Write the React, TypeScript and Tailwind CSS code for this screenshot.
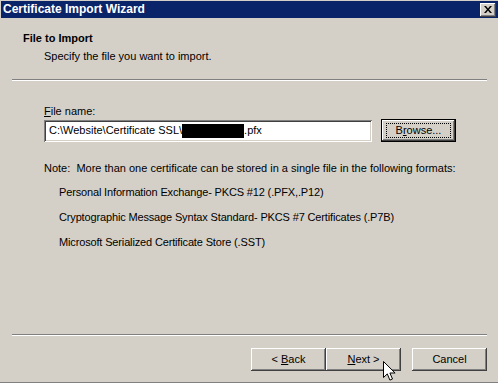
import React from "react";

const raised =
  "shadow-[inset_-1px_-1px_0_#404040,inset_1px_1px_0_#ffffff,inset_-2px_-2px_0_#808080,inset_2px_2px_0_#d4d0c8]";

function WinButton({ children, className = "" }: { children: React.ReactNode; className?: string }) {
  return (
    <div className={`w-[75px] h-[23px] bg-[#d4d0c8] flex items-center justify-center ${raised} ${className}`}>
      {children}
    </div>
  );
}

function Separator() {
  return (
    <div className="mx-[12px] w-[475px]">
      <div className="h-px bg-[#808080]" />
      <div className="h-px bg-white" />
    </div>
  );
}

export default function App() {
  return (
    <div className="relative w-[498px] h-[383px] overflow-hidden bg-[#d4d0c8] text-black text-[11px] leading-[13px] font-['Liberation_Sans',Arial,sans-serif] border-b border-[#808080]">
      {/* title bar */}
      <div className="mt-px ml-px h-[17px] bg-[#0a246a] flex items-center justify-between pl-[2px] pr-[2px]">
        <span className="text-white font-bold text-[12px]">Certificate Import Wizard</span>
        <div className={`w-[16px] h-[14px] bg-[#d4d0c8] flex items-center justify-center ${raised}`}>
          <svg width="8" height="7" viewBox="0 0 8 7">
            <path d="M0 0h2l2 2.5L6 0h2L5 3.5 8 7H6L4 4.5 2 7H0l3-3.5z" fill="#000" />
          </svg>
        </div>
      </div>

      {/* header */}
      <div className="pt-[14px] pl-[23px] font-bold">File to Import</div>
      <div className="pt-[5px] pl-[44px]">Specify the file you want to import.</div>
      <div className="mt-[16px]">
        <Separator />
      </div>

      {/* body */}
      <div className="pl-[44px] pt-[24px]">
        <div>
          <span className="underline">F</span>ile name:
        </div>
        <div className="mt-[1px] flex items-center gap-[9px]">
          <div className="w-[328px] h-[22px] bg-white flex items-center pl-[5px] shadow-[inset_1px_1px_0_#808080,inset_-1px_-1px_0_#ffffff,inset_2px_2px_0_#404040,inset_-2px_-2px_0_#d4d0c8]">
            <span>C:\Website\Certificate SSL\</span>
            <span className="inline-block w-[62px] h-[14px] bg-black" />
            <span>.pfx</span>
          </div>
          <div className="w-[75px] h-[23px] bg-[#d4d0c8] border border-black flex items-center justify-center shadow-[inset_-1px_-1px_0_#404040,inset_1px_1px_0_#ffffff,inset_-2px_-2px_0_#808080]">
            <div className="w-[65px] h-[15px] border border-dotted border-black flex items-center justify-center">
              <span>
                B<span className="underline">r</span>owse...
              </span>
            </div>
          </div>
        </div>

        <div className="mt-[20px]">Note:&nbsp; More than one certificate can be stored in a single file in the following formats:</div>
        <div className="pl-[15px] mt-[11px] flex flex-col gap-[12px] tracking-[-0.15px]">
          <div>Personal Information Exchange- PKCS #12 (.PFX,.P12)</div>
          <div>Cryptographic Message Syntax Standard- PKCS #7 Certificates (.P7B)</div>
          <div>Microsoft Serialized Certificate Store (.SST)</div>
        </div>
      </div>

      {/* footer */}
      <div className="absolute left-0 right-0 top-[334px]">
        <Separator />
        <div className="mt-[12px] flex justify-end pr-[11px]">
          <WinButton>
            &lt; <span className="underline ml-[3px]">B</span>ack
          </WinButton>
          <WinButton>
            <span className="underline">N</span>ext &gt;
          </WinButton>
          <WinButton className="ml-[11px]">Cancel</WinButton>
        </div>
      </div>

      {/* mouse pointer */}
      <svg className="absolute left-[383px] top-[361px]" width="13" height="22" viewBox="0 0 13 22">
        <path d="M0.5 0.5v16l3.8-3.6 2.6 6.2 2.6-1.1-2.6-6h5.2z" fill="#fff" stroke="#000" strokeWidth="1" />
      </svg>
    </div>
  );
}
